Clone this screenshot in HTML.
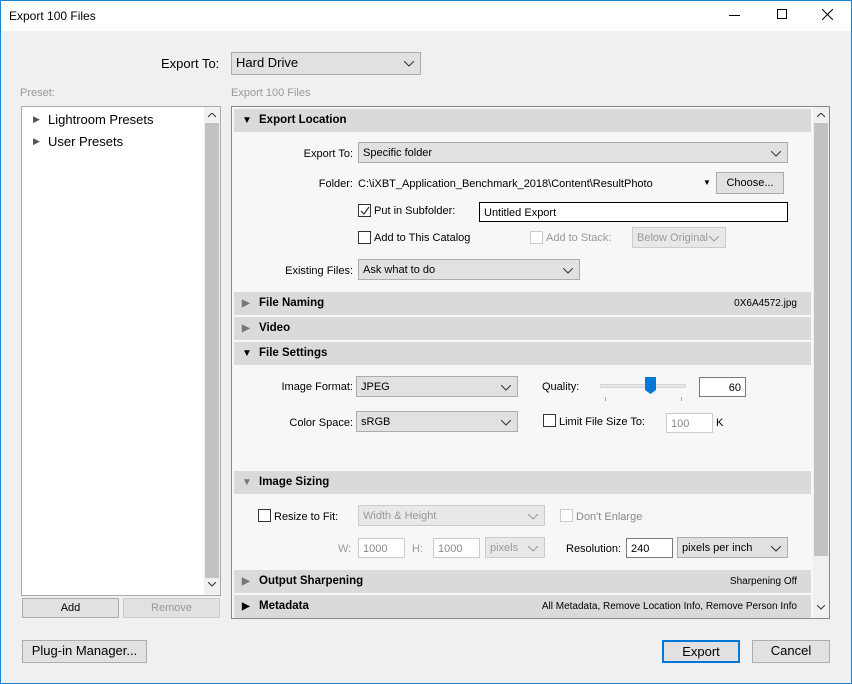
<!DOCTYPE html><html><head><style>
*{box-sizing:border-box}
body{margin:0;width:852px;height:684px;background:#f0f0f0;font-family:"Liberation Sans",sans-serif;font-size:11px;color:#000;position:relative;overflow:hidden}
.a{position:absolute;white-space:nowrap}
.dd{position:absolute;background:#e1e1e1;border:1px solid #adadad;padding:3px 4px;line-height:14px;font-size:11px}
.dd.dis{color:#999;background:#e8e8e8;border-color:#ccc}
.dd svg{position:absolute;right:6px;top:8px}
.hd{position:absolute;left:234px;width:577px;height:23px;background:#dadada;font-weight:bold;line-height:23px;padding-left:25px;font-size:11.5px}
.hd i{position:absolute;left:8px;top:0;font-style:normal;font-size:10px;color:#333}
.hd span{position:absolute;right:14px;font-weight:normal;font-size:10px}
.cb{position:absolute;width:13px;height:13px;border:1px solid #333;background:#fff}
.cb.dis{border-color:#ccc}
.tb{position:absolute;background:#fff;border:1px solid #7a7a7a;padding:3px 4px;line-height:14px}
.tb.dis{border-color:#ccc;color:#888}
.btn{position:absolute;background:#e1e1e1;border:1px solid #adadad;text-align:center;line-height:20px}
.r{text-align:right}
</style></head><body>
<div class="a" style="left:0;top:0;width:852px;height:31px;background:#fff"></div>
<div class="a" style="left:0;top:0;width:1px;height:684px;background:#1883d7"></div>
<div class="a" style="right:0;top:0;width:1px;height:684px;background:#1883d7"></div>
<div class="a" style="left:0;top:0;width:852px;height:1px;background:#1883d7"></div>
<div class="a" style="left:0;bottom:0;width:852px;height:1px;background:#1883d7"></div>
<div class="a" style="left:9px;top:9px;font-size:12px">Export 100 Files</div>
<div class="a" style="left:729px;top:15px;width:11px;height:1px;background:#000"></div>
<div class="a" style="left:777px;top:9px;width:10px;height:10px;border:1px solid #000"></div>
<svg class="a" style="left:822px;top:9px" width="11" height="11"><path d="M0 0L11 11M11 0L0 11" stroke="#000"/></svg>

<div class="a" style="left:161px;top:56px;font-size:13px">Export To:</div>
<div class="dd" style="left:231px;top:52px;width:190px;height:23px;font-size:13px;padding-top:3px">Hard Drive<svg width="10" height="6"><path d="M0 0L5 5L10 0" stroke="#333" fill="none"/></svg></div>
<div class="a" style="left:20px;top:87px;color:#999;font-size:11px">Preset:</div>
<div class="a" style="left:231px;top:87px;color:#999;font-size:11px">Export 100 Files</div>

<div class="a" style="left:21px;top:106px;width:200px;height:490px;background:#fff;border:1px solid #aaa"></div>
<div class="a" style="left:204px;top:107px;width:16px;height:488px;background:#f0f0f0"></div>
<div class="a" style="left:205px;top:123px;width:14px;height:455px;background:#c2c2c2"></div>
<svg class="a" style="left:208px;top:113px" width="8" height="5"><path d="M0 4L4 0L8 4" stroke="#333" fill="none"/></svg>
<svg class="a" style="left:208px;top:582px" width="8" height="5"><path d="M0 0L4 4L8 0" stroke="#333" fill="none"/></svg>
<div class="a" style="left:33px;top:114px;font-size:9px;color:#555">&#9654;</div>
<div class="a" style="left:48px;top:112px;font-size:13px">Lightroom Presets</div>
<div class="a" style="left:33px;top:136px;font-size:9px;color:#555">&#9654;</div>
<div class="a" style="left:48px;top:134px;font-size:13px">User Presets</div>
<div class="btn" style="left:22px;top:598px;width:97px;height:20px;line-height:18px">Add</div>
<div class="btn" style="left:123px;top:598px;width:97px;height:20px;line-height:18px;color:#999;border-color:#ccc">Remove</div>

<div class="a" style="left:231px;top:106px;width:599px;height:513px;background:#f7f7f7;border:1px solid #888"></div>
<div class="a" style="left:813px;top:107px;width:16px;height:511px;background:#f0f0f0"></div>
<div class="a" style="left:814px;top:123px;width:14px;height:433px;background:#c2c2c2"></div>
<svg class="a" style="left:817px;top:113px" width="8" height="5"><path d="M0 4L4 0L8 4" stroke="#333" fill="none"/></svg>
<svg class="a" style="left:817px;top:605px" width="8" height="5"><path d="M0 0L4 4L8 0" stroke="#333" fill="none"/></svg>

<div class="hd" style="top:109px"><i style="color:#000">&#9660;</i>Export Location</div>
<div class="a r" style="left:250px;width:103px;top:148px">Export To:</div>
<div class="dd" style="left:358px;top:142px;width:430px;height:21px">Specific folder<svg width="10" height="6"><path d="M0 0L5 5L10 0" stroke="#333" fill="none"/></svg></div>
<div class="a r" style="left:250px;width:103px;top:178px">Folder:</div>
<div class="a" style="left:358px;top:178px">C:\iXBT_Application_Benchmark_2018\Content\ResultPhoto</div>
<div class="a" style="left:703px;top:178px;font-size:8px">&#9660;</div>
<div class="btn" style="left:716px;top:172px;width:68px;height:22px">Choose...</div>
<div class="cb" style="left:358px;top:204px"></div>
<svg class="a" style="left:359px;top:205px" width="12" height="12"><path d="M2 6L5 9L10 2" stroke="#333" stroke-width="1.2" fill="none"/></svg>
<div class="a" style="left:374px;top:205px">Put in Subfolder:</div>
<div class="tb" style="left:479px;top:202px;width:309px;height:20px;border-color:#000">Untitled Export</div>
<div class="cb" style="left:358px;top:231px"></div>
<div class="a" style="left:374px;top:232px">Add to This Catalog</div>
<div class="cb dis" style="left:530px;top:231px"></div>
<div class="a" style="left:546px;top:232px;color:#999">Add to Stack:</div>
<div class="dd dis" style="left:632px;top:227px;width:94px;height:21px;font-size:11px">Below Original<svg width="10" height="6"><path d="M0 0L5 5L10 0" stroke="#999" fill="none"/></svg></div>
<div class="a r" style="left:250px;width:103px;top:265px">Existing Files:</div>
<div class="dd" style="left:358px;top:259px;width:222px;height:21px">Ask what to do<svg width="10" height="6"><path d="M0 0L5 5L10 0" stroke="#333" fill="none"/></svg></div>

<div class="hd" style="top:292px"><i style="color:#777">&#9654;</i>File Naming<span>0X6A4572.jpg</span></div>
<div class="hd" style="top:317px"><i style="color:#777">&#9654;</i>Video</div>
<div class="hd" style="top:342px"><i style="color:#000">&#9660;</i>File Settings</div>
<div class="a r" style="left:250px;width:103px;top:381px">Image Format:</div>
<div class="dd" style="left:356px;top:376px;width:162px;height:21px">JPEG<svg width="10" height="6"><path d="M0 0L5 5L10 0" stroke="#333" fill="none"/></svg></div>
<div class="a" style="left:542px;top:381px">Quality:</div>
<div class="a" style="left:600px;top:384px;width:86px;height:4px;background:#e6e6e6;border:1px solid #d6d6d6"></div>
<svg class="a" style="left:645px;top:377px" width="12" height="18"><path d="M0 0H11V13L5.5 17L0 13Z" fill="#0078d7"/></svg>
<div class="a" style="left:605px;top:397px;width:1px;height:4px;background:#aaa"></div>
<div class="a" style="left:681px;top:397px;width:1px;height:4px;background:#aaa"></div>
<div class="tb r" style="left:699px;top:377px;width:47px;height:20px">60</div>
<div class="a r" style="left:250px;width:103px;top:417px">Color Space:</div>
<div class="dd" style="left:356px;top:411px;width:162px;height:21px">sRGB<svg width="10" height="6"><path d="M0 0L5 5L10 0" stroke="#333" fill="none"/></svg></div>
<div class="cb" style="left:543px;top:414px"></div>
<div class="a" style="left:559px;top:416px">Limit File Size To:</div>
<div class="tb dis" style="left:666px;top:413px;width:47px;height:20px">100</div>
<div class="a" style="left:716px;top:417px">K</div>

<div class="hd" style="top:471px"><i style="color:#777">&#9660;</i>Image Sizing</div>
<div class="cb" style="left:258px;top:509px"></div>
<div class="a" style="left:274px;top:511px">Resize to Fit:</div>
<div class="dd dis" style="left:358px;top:505px;width:187px;height:21px">Width &amp; Height<svg width="10" height="6"><path d="M0 0L5 5L10 0" stroke="#999" fill="none"/></svg></div>
<div class="cb dis" style="left:560px;top:509px"></div>
<div class="a" style="left:576px;top:511px;color:#888">Don't Enlarge</div>
<div class="a" style="left:338px;top:543px;color:#999">W:</div>
<div class="tb dis" style="left:358px;top:538px;width:47px;height:20px">1000</div>
<div class="a" style="left:412px;top:543px;color:#999">H:</div>
<div class="tb dis" style="left:433px;top:538px;width:47px;height:20px">1000</div>
<div class="dd dis" style="left:485px;top:537px;width:60px;height:21px">pixels<svg width="10" height="6"><path d="M0 0L5 5L10 0" stroke="#999" fill="none"/></svg></div>
<div class="a" style="left:566px;top:543px">Resolution:</div>
<div class="tb" style="left:626px;top:538px;width:47px;height:20px">240</div>
<div class="dd" style="left:677px;top:537px;width:111px;height:21px">pixels per inch<svg width="10" height="6"><path d="M0 0L5 5L10 0" stroke="#333" fill="none"/></svg></div>

<div class="hd" style="top:570px"><i style="color:#777">&#9654;</i>Output Sharpening<span>Sharpening Off</span></div>
<div class="hd" style="top:595px"><i style="color:#000">&#9654;</i>Metadata<span>All Metadata, Remove Location Info, Remove Person Info</span></div>

<div class="btn" style="left:22px;top:640px;width:125px;height:23px;font-size:13px">Plug-in Manager...</div>
<div class="btn" style="left:662px;top:640px;width:78px;height:23px;font-size:13px;border:2px solid #0078d7;line-height:19px">Export</div>
<div class="btn" style="left:752px;top:640px;width:78px;height:23px;font-size:13px">Cancel</div>
</body></html>
